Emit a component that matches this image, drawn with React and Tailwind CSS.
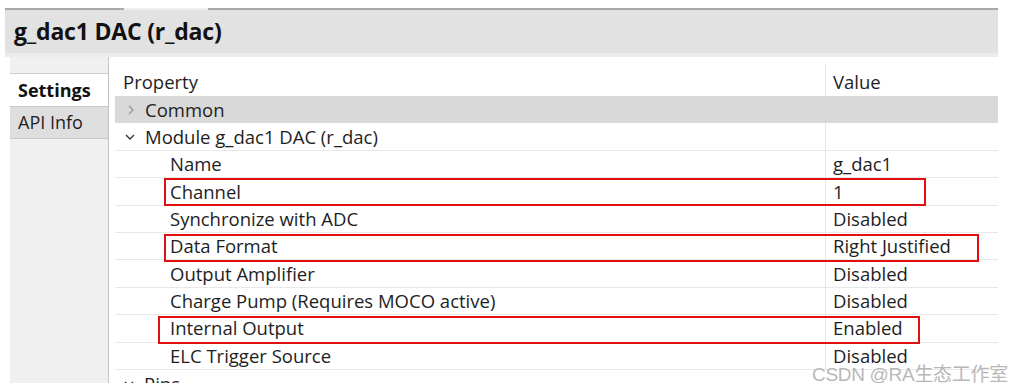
import React from 'react'

const rows = [
  { name: 'Name', value: 'g_dac1' },
  { name: 'Channel', value: '1' },
  { name: 'Synchronize with ADC', value: 'Disabled' },
  { name: 'Data Format', value: 'Right Justified' },
  { name: 'Output Amplifier', value: 'Disabled' },
  { name: 'Charge Pump (Requires MOCO active)', value: 'Disabled' },
  { name: 'Internal Output', value: 'Enabled' },
  { name: 'ELC Trigger Source', value: 'Disabled' },
]

// red highlight boxes drawn over the grid (screenshot annotation)
const marks = [
  { top: 178, left: 164, width: 762, height: 28 },
  { top: 234, left: 164, width: 815, height: 28 },
  { top: 316, left: 158, width: 762, height: 28 },
]

function Chevron({ open, className }) {
  return (
    <svg width="12" height="12" viewBox="0 0 12 12" className={className}>
      {open ? (
        <path d="M2 4 L6 8 L10 4" fill="none" stroke="currentColor" strokeWidth="1.4" />
      ) : (
        <path d="M4 2 L8 6 L4 10" fill="none" stroke="currentColor" strokeWidth="1.4" />
      )}
    </svg>
  )
}

export default function App() {
  return (
    <div
      className="relative w-[1010px] h-[392px] overflow-hidden bg-white text-[#1e1e1e]"
      style={{ fontFamily: '"Open Sans", "Noto Sans", sans-serif' }}
    >
      {/* the captured view is cut off a few pixels above the bottom */}
      <div className="h-[383px] overflow-hidden">
        <div className="w-[993px] ml-[5px]">
          {/* editor tab strip */}
          <div className="flex mt-[8px] h-[2px]">
            <div className="w-[61px] border-t-2 border-[#a8a8a8]" />
            <div className="w-[58px] border-t-2 border-l border-[#a8a8a8]" />
            <div className="w-[84px] bg-[#efefef]" />
            <div className="w-[86px] border-t-2 border-[#a8a8a8]" />
            <div className="w-[84px] border-t-2 border-l border-[#a8a8a8]" />
            <div className="w-[51px] border-t-2 border-l border-[#a8a8a8]" />
            <div className="flex-1 border-t-2 border-l border-[#a8a8a8]" />
          </div>

          {/* title bar */}
          <div className="h-[43px] bg-[#e2e2e2] flex items-center pl-[9px]">
            <span className="text-[23px] font-bold text-[#111] tracking-[-0.2px]">g_dac1 DAC (r_dac)</span>
          </div>
          <div className="h-[4px] bg-[#ececec]" />
        </div>

        <div className="flex">
          {/* left tabs */}
          <div className="ml-[10px] w-[99px] h-[340px] bg-[#f0f0f0] border-r border-[#c4c4c4] flex flex-col">
            <div className="h-[17px] border-b border-[#cfcfcf]" />
            <div className="h-[32px] bg-white flex items-center pl-[8px] text-[18px] font-bold text-[#111]">Settings</div>
            <div className="h-[33px] bg-[#dedede] border-y border-[#c8c8c8] flex items-center pl-[8px] text-[18px]">API Info</div>
          </div>

          {/* property grid */}
          <div className="ml-[6px] w-[883px] mt-[7px] text-[18.5px]">
            <div className="flex h-[32px]">
              <div className="w-[710px] flex items-center pl-[8px] pt-[4px]">Property</div>
              <div className="flex-1 border-l border-[#e6e6e6] flex items-center pl-[7px] pt-[4px]">Value</div>
            </div>
            <div className="flex h-[27.4px] bg-[#d9d9d9] items-center">
              <Chevron className="ml-[10px] mr-[8px] text-[#9a9a9a]" />
              <span>Common</span>
            </div>
            <div className="flex h-[27.4px] border-b border-[#e8e8e8]">
              <div className="w-[710px] flex items-center">
                <Chevron open className="ml-[9px] mr-[9px] text-[#333]" />
                <span>Module g_dac1 DAC (r_dac)</span>
              </div>
              <div className="flex-1 border-l border-[#e6e6e6]" />
            </div>
            {rows.map((r) => (
              <div key={r.name} className="flex h-[27.4px] border-b border-[#e8e8e8]">
                <div className="w-[710px] flex items-center pl-[55px]">{r.name}</div>
                <div className="flex-1 border-l border-[#e6e6e6] flex items-center pl-[7px]">{r.value}</div>
              </div>
            ))}
            <div className="flex h-[27.4px] items-center">
              <Chevron open className="ml-[8px] mr-[9px] text-[#333]" />
              <span>Pins</span>
            </div>
          </div>
        </div>
      </div>

      {marks.map((m, i) => (
        <div
          key={i}
          className="absolute border-2 border-[#e01010]"
          style={{ top: m.top, left: m.left, width: m.width, height: m.height }}
        />
      ))}

      <div
        className="absolute left-[812px] top-[364px] text-[19px] leading-[22px] text-[#b8b8b8] tracking-[-0.3px]"
        style={{ fontFamily: '"Liberation Sans", "Noto Sans CJK SC", sans-serif' }}
      >
        CSDN @RA生态工作室
      </div>
    </div>
  )
}
